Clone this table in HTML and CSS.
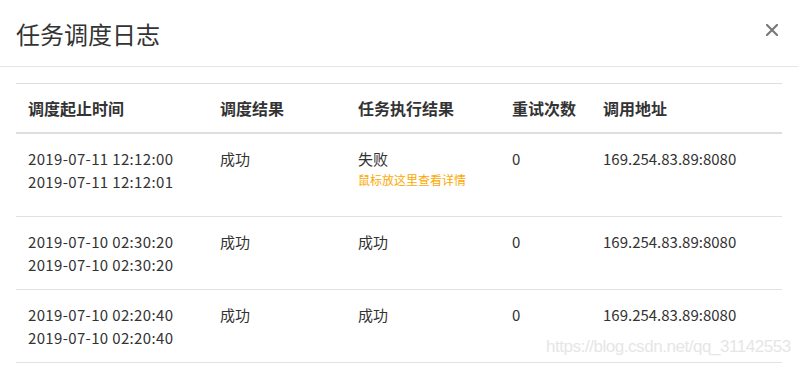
FILE: index.html
```html
<!DOCTYPE html>
<html lang="zh">
<head>
<meta charset="utf-8">
<title>任务调度日志</title>
<link rel="stylesheet" href="styles.css">
</head>
<body>
<div class="modal">
  <div class="modal-header">
    <h4 class="modal-title">任务调度日志</h4>
    <button class="close" type="button" aria-label="关闭">
      <svg width="12" height="12" viewBox="0 0 12 12"><path d="M1 1 L11 11 M11 1 L1 11" stroke="#7a7a7a" stroke-width="2.2" stroke-linecap="square"/></svg>
    </button>
  </div>
  <div class="modal-body">
    <table class="log-table">
      <colgroup>
        <col class="c-time"><col class="c-result"><col class="c-exec"><col class="c-retry"><col class="c-addr">
      </colgroup>
      <thead>
        <tr><th>调度起止时间</th><th>调度结果</th><th>任务执行结果</th><th>重试次数</th><th>调用地址</th></tr>
      </thead>
      <tbody>
        <tr>
          <td class="time"><div>2019-07-11 12:12:00</div><div>2019-07-11 12:12:01</div></td>
          <td>成功</td>
          <td><div>失败</div><div class="detail">鼠标放这里查看详情</div></td>
          <td>0</td>
          <td>169.254.83.89:8080</td>
        </tr>
        <tr>
          <td class="time"><div>2019-07-10 02:30:20</div><div>2019-07-10 02:30:20</div></td>
          <td>成功</td>
          <td>成功</td>
          <td>0</td>
          <td>169.254.83.89:8080</td>
        </tr>
        <tr>
          <td class="time"><div>2019-07-10 02:20:40</div><div>2019-07-10 02:20:40</div></td>
          <td>成功</td>
          <td>成功</td>
          <td>0</td>
          <td>169.254.83.89:8080</td>
        </tr>
      </tbody>
    </table>
  </div>
  <div class="watermark">https://blog.csdn.net/qq_31142553</div>
</div>
</body>
</html>
```
FILE: styles.css
```css
html, body {
  margin: 0;
  padding: 0;
  background: #fff;
}
body {
  font-family: "Noto Sans CJK SC", "Noto Sans", sans-serif;
  color: #333;
  font-size: 15px;
}
.modal {
  position: relative;
  width: 798px;
  height: 365px;
  overflow: hidden;
}
.modal-header {
  height: 67px;
  border-bottom: 1px solid #e5e5e5;
  display: flex;
  align-items: center;
  justify-content: space-between;
  padding: 0 20px 0 16px;
  box-sizing: border-box;
}
.modal-title {
  margin: 0;
  font-size: 24px;
  font-weight: normal;
  color: #333;
  line-height: 1;
  margin-top: 1px;
}
.close {
  border: 0;
  background: none;
  padding: 0;
  width: 12px;
  height: 12px;
  margin-bottom: 7px;
  display: block;
}
.close svg { display: block; }
.modal-body {
  padding: 16px 16px 0 16px;
}
.log-table {
  width: 766px;
  border-collapse: collapse;
  table-layout: fixed;
  border-top: 1px solid #dddee2;
}
.c-time { width: 192px; }
.c-result { width: 138px; }
.c-exec { width: 154px; }
.c-retry { width: 91px; }
.c-addr { width: 191px; }
.log-table th {
  text-align: left;
  font-size: 16px;
  font-weight: bold;
  line-height: 22px;
  padding: 13px 12px;
  border-bottom: 2px solid #dddee2;
  color: #333;
}
.log-table td {
  vertical-align: top;
  line-height: 23px;
  padding: 13px 12px;
  border-bottom: 1px solid #e2e2e6;
  color: #333;
  white-space: nowrap;
}
.log-table td.time {
  letter-spacing: 0.35px;
}
.detail {
  font-size: 12px;
  line-height: 20px;
  color: #fca800;
  margin-bottom: 13px;
}
.watermark {
  position: absolute;
  left: 546px;
  top: 335px;
  font-family: "Liberation Sans", Arial, sans-serif;
  font-size: 17px;
  letter-spacing: -0.45px;
  line-height: 24px;
  color: #e6e6e6;
  white-space: nowrap;
}
```
